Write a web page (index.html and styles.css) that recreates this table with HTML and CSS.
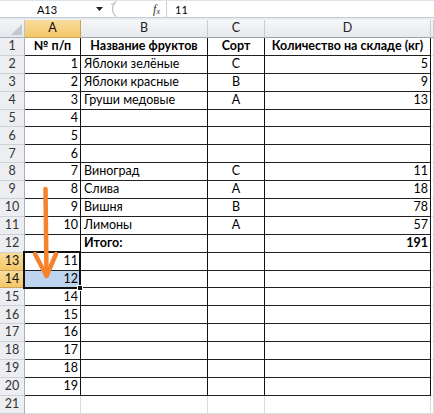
FILE: index.html
```html
<!DOCTYPE html>
<html lang="ru">
<head>
<meta charset="utf-8">
<title>Фрукты</title>
<link rel="stylesheet" href="styles.css">
</head>
<body>
<div class="formula-bar">
  <div class="name-box">A13</div>
  <div class="name-drop"><svg width="7" height="4" viewBox="0 0 7 4"><path d="M0 0h7L3.5 4z" fill="#222"/></svg></div>
  <div class="splitter"><svg width="14" height="18" viewBox="0 0 14 18"><path d="M12 1.5A10 10 0 0 0 12 16.5" fill="none" stroke="#b9bec5" stroke-width="1.2"/><path d="M7 4.5q2 -1.5 4 -0.5" fill="none" stroke="#c9cdd3" stroke-width="1.2"/></svg></div>
  <div class="fx-btn"><span class="fx">f<sub>x</sub></span></div>
  <div class="formula">11</div>
</div>
<div class="strip"></div>
<div class="sheet">
  <div class="corner"><span class="corner-tri"></span></div>
  <div class="ch sel-h">A</div><div class="ch">B</div><div class="ch">C</div><div class="ch">D</div><div class="ch"></div>

  <div class="rh">1</div><div class="t b m">№ п/п</div><div class="t b m">Название фруктов</div><div class="t b m">Сорт</div><div class="t b m">Количество на складе (кг)</div><div class="c"></div>
  <div class="rh">2</div><div class="t r">1</div><div class="t">Яблоки зелёные</div><div class="t m">C</div><div class="t r">5</div><div class="c"></div>
  <div class="rh">3</div><div class="t r">2</div><div class="t">Яблоки красные</div><div class="t m">B</div><div class="t r">9</div><div class="c"></div>
  <div class="rh">4</div><div class="t r">3</div><div class="t">Груши медовые</div><div class="t m">A</div><div class="t r">13</div><div class="c"></div>
  <div class="rh">5</div><div class="t r">4</div><div class="t"></div><div class="t"></div><div class="t"></div><div class="c"></div>
  <div class="rh">6</div><div class="t r">5</div><div class="t"></div><div class="t"></div><div class="t"></div><div class="c"></div>
  <div class="rh">7</div><div class="t r">6</div><div class="t"></div><div class="t"></div><div class="t"></div><div class="c"></div>
  <div class="rh">8</div><div class="t r">7</div><div class="t">Виноград</div><div class="t m">C</div><div class="t r">11</div><div class="c"></div>
  <div class="rh">9</div><div class="t r">8</div><div class="t">Слива</div><div class="t m">A</div><div class="t r">18</div><div class="c"></div>
  <div class="rh">10</div><div class="t r">9</div><div class="t">Вишня</div><div class="t m">B</div><div class="t r">78</div><div class="c"></div>
  <div class="rh">11</div><div class="t r">10</div><div class="t">Лимоны</div><div class="t m">A</div><div class="t r">57</div><div class="c"></div>
  <div class="rh">12</div><div class="t r"></div><div class="t b">Итого:</div><div class="t"></div><div class="t r b">191</div><div class="c"></div>
  <div class="rh sel-h">13</div><div class="t r">11</div><div class="t"></div><div class="t"></div><div class="t"></div><div class="c"></div>
  <div class="rh sel-h">14</div><div class="t r hl">12</div><div class="t"></div><div class="t"></div><div class="t"></div><div class="c"></div>
  <div class="rh">15</div><div class="t r">14</div><div class="t"></div><div class="t"></div><div class="t"></div><div class="c"></div>
  <div class="rh">16</div><div class="t r">15</div><div class="t"></div><div class="t"></div><div class="t"></div><div class="c"></div>
  <div class="rh">17</div><div class="t r">16</div><div class="t"></div><div class="t"></div><div class="t"></div><div class="c"></div>
  <div class="rh">18</div><div class="t r">17</div><div class="t"></div><div class="t"></div><div class="t"></div><div class="c"></div>
  <div class="rh">19</div><div class="t r">18</div><div class="t"></div><div class="t"></div><div class="t"></div><div class="c"></div>
  <div class="rh">20</div><div class="t r">19</div><div class="t"></div><div class="t"></div><div class="t"></div><div class="c"></div>
  <div class="rh">21</div><div class="c"></div><div class="c"></div><div class="c"></div><div class="c"></div><div class="c"></div>

  <div class="selection"></div>
  <div class="fill-handle"></div>
  <svg class="arrow" width="40" height="100" viewBox="0 0 40 100">
    <path d="M15.5 3L16.5 89" fill="none" stroke="#f5832b" stroke-width="4.5" stroke-linecap="round"/>
    <path d="M5 68L16.5 90L26 68" fill="none" stroke="#f5832b" stroke-width="4.5" stroke-linecap="round" stroke-linejoin="round"/>
  </svg>
</div>
</body>
</html>
```
FILE: styles.css
```css
* { box-sizing: border-box; }
html, body { margin: 0; padding: 0; background: #fff; }
body {
  width: 434px;
  height: 414px;
  overflow: hidden;
  font-family: Lato, "Noto Sans", sans-serif;
  font-size: 12.5px;
  color: #000;
}

.formula-bar {
  height: 18px;
  display: flex;
  align-items: stretch;
  border-top: 1px solid #dfe3e8;
  border-bottom: 1px solid #c4cad3;
  background: #fff;
}
.name-box {
  width: 94px;
  display: flex;
  align-items: center;
  justify-content: center;
  font-size: 11px;
}
.name-drop {
  width: 10px;
  display: flex;
  align-items: center;
  justify-content: center;
}
.splitter {
  width: 16px;
  display: flex;
  align-items: center;
}
.fx-btn {
  width: 47px;
  display: flex;
  align-items: center;
  justify-content: flex-end;
  padding-right: 6px;
  border-right: 1px solid #c9ced6;
}
.fx {
  font-family: "Liberation Serif", serif;
  font-style: italic;
  font-size: 12px;
  color: #333;
  line-height: 1;
}
.fx sub { font-size: 8px; vertical-align: -1px; }
.formula {
  flex: 1;
  display: flex;
  align-items: center;
  padding-left: 8px;
  font-size: 11px;
}

.strip {
  height: 2px;
  background: #e9ecf0;
}

.sheet {
  position: relative;
  display: grid;
  grid-template-columns: 25px 56px 127px 57px 166px 1fr;
  grid-template-rows: 18px;
  grid-auto-rows: 17.9px;
}

.sheet > div {
  display: flex;
  align-items: center;
  white-space: nowrap;
  overflow: hidden;
  line-height: 1;
}

.corner {
  background: linear-gradient(#f3f4f6, #e4e7eb);
  border-right: 1px solid #bfc4ca;
  border-bottom: 1px solid #aeb4bb;
  justify-content: flex-end;
  align-items: flex-end !important;
  padding: 0 2px 2px 0;
}
.corner-tri {
  width: 11px;
  height: 11px;
  background: #c3c8ce;
  clip-path: polygon(100% 0, 100% 100%, 0 100%);
}

.ch {
  justify-content: center;
  background: linear-gradient(#f6f7f9, #e6e9ed);
  border-right: 1px solid #c9cdd2;
  border-bottom: 1px solid #9ea4ab;
  color: #222;
  font-size: 12.5px;
}

.rh {
  justify-content: center;
  background: #eceef1;
  border-right: 1px solid #a9afb6;
  border-bottom: 1px solid #cdd1d6;
  color: #333;
  font-size: 12.5px;
}

.sel-h {
  background: linear-gradient(#f9dc9c, #f3c767);
  border-bottom-color: #c9a35a;
  border-right-color: #c9a35a;
  color: #111;
}

.c {
  border-right: 1px solid #dadcdf;
  border-bottom: 1px solid #dadcdf;
}

.t {
  border-right: 1px solid #111;
  border-bottom: 1px solid #222;
  padding: 0 3px;
}
.r { justify-content: flex-end; padding-right: 2px; }
.m { justify-content: center; }
.b { font-weight: bold; }
.hl { background: #bfd5ef; }

.selection {
  position: absolute;
  left: 23px;
  top: 231px;
  width: 58px;
  height: 38px;
  border: 2px solid #111;
  pointer-events: none;
}
.fill-handle {
  position: absolute;
  left: 77px;
  top: 265px;
  width: 6px;
  height: 6px;
  background: #111;
  border: 1px solid #fff;
}
.arrow {
  position: absolute;
  left: 30px;
  top: 166px;
}
```
